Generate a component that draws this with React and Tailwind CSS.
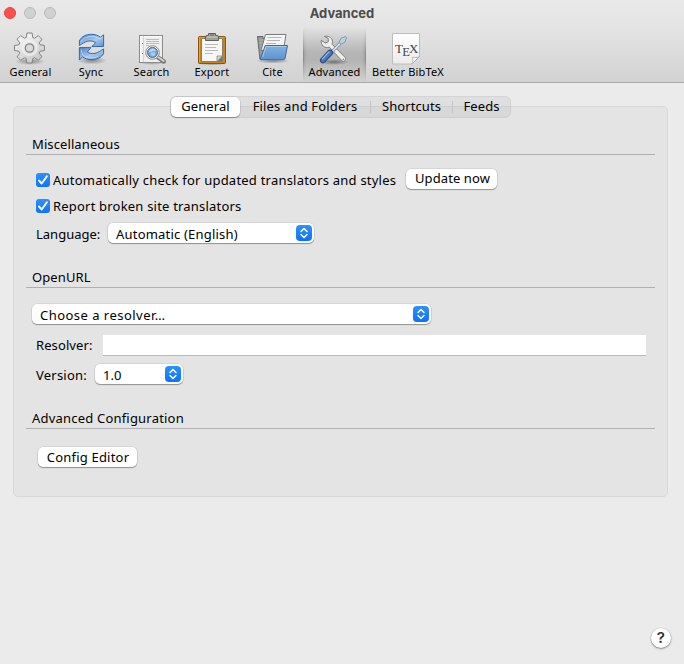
import React from "react";

const gearPath = (() => {
  const cx = 29.5, cy = 48, teeth = 8;
  const pts = [];
  for (let i = 0; i < teeth; i++) {
    const a = (i * 2 * Math.PI) / teeth - Math.PI / 2;
    [[-0.3, 11], [-0.17, 15.2], [0.17, 15.2], [0.3, 11]].forEach(([d, r]) => {
      pts.push((cx + r * Math.cos(a + d)).toFixed(2) + " " + (cy + r * Math.sin(a + d)).toFixed(2));
    });
  }
  return "M" + pts.join("L") + "Z";
})();

function GearIcon() {
  return (
    <svg className="block h-9 w-[61px]" viewBox="0 30 61 36">
      <defs>
        <linearGradient id="gear" x1="0" y1="0" x2="0.6" y2="1">
          <stop offset="0" stopColor="#fdfdfd" />
          <stop offset="1" stopColor="#c9c9c7" />
        </linearGradient>
        <radialGradient id="shade">
          <stop offset="0" stopColor="#000" stopOpacity=".38" />
          <stop offset="1" stopColor="#000" stopOpacity="0" />
        </radialGradient>
      </defs>
      <ellipse cx="30" cy="61.5" rx="15" ry="3.5" fill="url(#shade)" />
      <path d={gearPath} fill="url(#gear)" stroke="#848482" strokeWidth="1" strokeLinejoin="round" />
      <circle cx="29.5" cy="48" r="7" fill="none" stroke="#f4f4f4" strokeWidth="2" opacity=".7" />
      <circle cx="29.5" cy="48" r="4.2" fill="#dadada" stroke="#858583" strokeWidth="1.2" />
    </svg>
  );
}

function SyncIcon() {
  return (
    <svg className="block h-9 w-[60px]" viewBox="61 30 60 36">
      <defs>
        <linearGradient id="sync" x1="0" y1="0" x2="1" y2="1">
          <stop offset="0" stopColor="#4f83c3" />
          <stop offset=".55" stopColor="#a9c9ee" />
          <stop offset="1" stopColor="#5c92d2" />
        </linearGradient>
      </defs>
      <ellipse cx="92" cy="60.5" rx="15" ry="4" fill="url(#shade)" />
      <path d="M79.4 45.5V41c2-4.500 6.600-6.700 12-6.700 3.600 0 6.800 1.100 9 3l3.200-2.500v11.700H91.900l3.800-3.800c-2.200-1.700-5-2.200-8-1.500-3 .6-5 2.200-8.300 4.300Z" fill="url(#sync)" stroke="#3767ad" strokeWidth="1" strokeLinejoin="round" />
      <path d="M103.600 49v4.500c-2 4.100-6.800 6.100-12 6.100-3.800 0-6.900-1-9.100-2.800L79.400 60V47.600h11.500L87.300 52c2.200 1.400 4.800 2 7.700 1.400 3.200-.6 5.200-2.500 8.600-4.400Z" fill="url(#sync)" stroke="#3767ad" strokeWidth="1" strokeLinejoin="round" />
      <path d="M81 41.500c3-4.700 12-7.200 18.500-2.500l3-2.300M81 49.500l1.800 5.300c4 3.300 11 4.200 15.700 1" fill="none" stroke="#cfe1f6" strokeWidth=".7" />
    </svg>
  );
}

function SearchIcon() {
  return (
    <svg className="block h-9 w-[61px]" viewBox="121 30 61 36">
      <ellipse cx="152" cy="62" rx="15" ry="3" fill="url(#shade)" />
      <rect x="139.500" y="35.500" width="23" height="27" fill="#efefee" stroke="#8b8b89" />
      <path d="M140.500 62V36.500H162" fill="none" stroke="#fff" />
      <path d="M143.500 36v26" stroke="#d5d5d5" />
      <path d="M146 39.500h13M146 41.500h13M146 43.500h13M146 45.500h3" stroke="#b4b4b4" strokeWidth=".9" />
      <path d="M142 43.500h1M142 53.500h1" stroke="#888" />
      <path d="m157.500 57 6.400 4.500" stroke="#73736f" strokeWidth="4.200" strokeLinecap="round" />
      <path d="m158 57 5.700 4" stroke="#d4d4d1" strokeWidth="2" strokeLinecap="round" />
      <circle cx="152.500" cy="52.500" r="6.800" fill="#f3f3f3" stroke="#80807e" strokeWidth=".9" />
      <circle cx="152.500" cy="52.500" r="5" fill="#79a5d8" stroke="#4269a1" strokeWidth="1" />
      <path d="M148.800 52.500c0-5 6.500-5.200 7.300-1.300-2.500-.4-4.700.4-7.300 1.300Z" fill="#b8d2ef" />
      <ellipse cx="153" cy="54" rx="2.500" ry="2" fill="#a9caec" />
    </svg>
  );
}

function ExportIcon() {
  return (
    <svg className="block h-9 w-[60px]" viewBox="182 30 60 36">
      <ellipse cx="212" cy="63.500" rx="15" ry="2" fill="url(#shade)" />
      <rect x="198.500" y="36.500" width="27" height="27" rx="1" fill="#c58420" stroke="#885511" />
      <path d="M199.500 62V37.500H224" fill="none" stroke="#dfa34b" />
      <path d="M201.500 38.500h21v23h-21z" fill="#f7f7f6" stroke="#8d805f" />
      <path d="m217 61.500 5.500-5.500h-5.500z" fill="#d6d6d4" stroke="#888884" strokeWidth=".8" />
      <path d="m217 61.500 5.500-5.500v5.500z" fill="#777873" />
      <path d="M205 44.500h13M205 47.500h11M205 50.500h13M205 53.500h8" stroke="#b9b9b8" />
      <path d="M205.500 40.500v-3.700q0-1.300 1.500-1.300h1.500v-2h7v2h1.500q1.500 0 1.500 1.300v3.700z" fill="#9fa39a" stroke="#60635d" />
      <path d="M207 37h10.500" stroke="#cacdc5" />
      <path d="M210 35h4" stroke="#646660" />
    </svg>
  );
}

function CiteIcon() {
  return (
    <svg className="block h-9 w-[61px]" viewBox="242 30 61 36">
      <defs>
        <linearGradient id="folder" x1="0" y1="0" x2="0" y2="1">
          <stop offset="0" stopColor="#86b1df" />
          <stop offset="1" stopColor="#5c94d1" />
        </linearGradient>
      </defs>
      <ellipse cx="273" cy="61" rx="17" ry="2.500" fill="url(#shade)" />
      <path d="M257.500 36.500h5.500v2h9l-2 21h-10z" fill="#999b98" stroke="#646663" />
      <path d="M259 40h5M259 43h5M260 46h4M260 49h3" stroke="#bcbdba" strokeWidth=".8" />
      <path d="m265.500 34.500 20.500-.1-2.500 16H261z" fill="#f4f4f3" stroke="#777876" />
      <path d="M267.500 37.500h14M267 40.500h13M266 43.500h10" stroke="#b4b5b4" />
      <path d="M265.200 45.500h22.300l-2.500 13q-.3 1.200-1.500 1.200h-22.300q-1 0-.8-1z" fill="url(#folder)" stroke="#376aa7" strokeLinejoin="round" />
      <path d="m266 46.500-3.500 10.500M266 46.500h20.300" fill="none" stroke="#b2d0ef" strokeWidth=".8" />
    </svg>
  );
}

function ToolsIcon() {
  return (
    <svg className="block h-9 w-[63px]" viewBox="303 30 63 36">
      <ellipse cx="334" cy="62" rx="15" ry="3" fill="url(#shade)" />
      <path d="M321.200 40.300 325.300 43l3-1.200-.1-3.400-3.900-1.900c3.400-1.100 7.700.7 8.200 4.700.1 1.300-.1 2.100-.5 3l13 13.100c2 2-.9 5.300-3.100 3.400l-12.600-13.500c-4.400 1.500-8.700-1.900-8.100-6.900Z" fill="#eeeeec" stroke="#7f817d" strokeWidth="1" strokeLinejoin="round" />
      <circle cx="343.300" cy="59.200" r=".8" fill="#858585" />
      <path d="m330.500 53.500 9.500-10.100" stroke="#7889a0" strokeWidth="3.200" />
      <path d="m330.500 53.500 9.500-10.100" stroke="#dae4ef" strokeWidth="1.700" />
      <path d="m339 42.400 2-4.100 4.700-1.800 1 1-1.900 4.700-3.600 1.900z" fill="#bfcfe2" stroke="#7189a8" strokeWidth=".8" />
      <path d="m323 60.200 7.100-7.600" stroke="#204b8a" strokeWidth="6" strokeLinecap="round" />
      <path d="m323 60.200 7.100-7.600" stroke="#4779bc" strokeWidth="4" strokeLinecap="round" />
      <path d="m322.500 58.800 6.500-7" stroke="#a1c0e5" strokeWidth="1.100" strokeLinecap="round" />
    </svg>
  );
}

function TexIcon() {
  return (
    <svg className="block h-9 w-[84px]" viewBox="366 30 84 36">
      <defs>
        <linearGradient id="page" x1="0" y1="0" x2="0" y2="1">
          <stop offset="0" stopColor="#fff" />
          <stop offset="1" stopColor="#ececec" />
        </linearGradient>
      </defs>
      <path d="M392.500 33.500h27v23l-7.500 7.500h-19.500z" fill="url(#page)" stroke="#bdbdbd" />
      <path d="M412 64c1-2 1-4.200.5-6.800 2.700.6 5 .3 7-.7z" fill="#fff" stroke="#b0b0b0" strokeWidth=".9" />
      <g fill="#444" fontFamily="Liberation Serif, serif" fontSize="13">
        <text x="394.900" y="53">T</text>
        <text x="402.200" y="56" fontSize="12.500">E</text>
        <text x="409" y="53">X</text>
      </g>
    </svg>
  );
}

function Tool({ icon, label, className }) {
  return (
    <div className={"flex h-[55px] shrink-0 flex-col items-center pt-[3px] " + className}>
      {icon}
      <span className="-mt-[2px] whitespace-nowrap text-[11px] leading-4 tracking-[0.18px] text-black">{label}</span>
    </div>
  );
}

function Check() {
  return (
    <span className="flex size-[14px] shrink-0 items-center justify-center rounded-[3px] bg-linear-to-b from-[#2d90ff] to-[#0a74fb]">
      <svg viewBox="0 0 14 14" className="size-[14px]">
        <path d="m3 7.500 2.700 3 5.200-7.200" fill="none" stroke="#fff" strokeWidth="1.900" strokeLinecap="round" strokeLinejoin="round" />
      </svg>
    </span>
  );
}

const raised = "bg-white shadow-[0_0_0_0.5px_#00000020,0_1px_1px_#00000050]";

function Select({ label, className, labelClass = "" }) {
  return (
    <div className={"flex h-5 items-center justify-between rounded-[5px] pl-2 pr-[2px] " + raised + " " + className}>
      <span className={"relative top-[2px] " + labelClass}>{label}</span>
      <span className="flex size-4 items-center justify-center rounded-[4px] bg-linear-to-b from-[#2d90ff] to-[#0873fb]">
        <svg viewBox="0 0 16 16" className="size-4">
          <path d="m5 6.500 3-3 3 3M5 9.500l3 3 3-3" fill="none" stroke="#fff" strokeWidth="1.500" strokeLinecap="round" strokeLinejoin="round" />
        </svg>
      </span>
    </div>
  );
}

function Heading({ children, className }) {
  return (
    <h2 className={"ml-3 mr-3 h-5 border-b border-[#b0b0b0] pl-[6px] leading-[19px] " + className}>{children}</h2>
  );
}

export default function App() {
  return (
    <div className="flex h-[664px] w-[684px] flex-col overflow-hidden bg-[#ebebeb] font-['Noto_Sans','Open_Sans',sans-serif] text-[13px] tracking-[0.1px] text-black">
      <header className="h-[83px] shrink-0 border-b border-[#aaa] bg-[linear-gradient(#e9e9e9,#e4e4e4_27px,#d2d2d2)]">
        <div className="grid h-[27px] grid-cols-[1fr_auto_1fr] items-center pb-[2px]">
          <div className="flex gap-2 pl-1">
            <span className="size-3 rounded-full border border-[#e0443e] bg-[#ff4f4b]" />
            <span className="size-3 rounded-full border border-[#bababa] bg-[#d1d1d1]" />
            <span className="size-3 rounded-full border border-[#bababa] bg-[#d1d1d1]" />
          </div>
          <h1 className="font-[Inter,sans-serif] text-[13px] font-bold leading-4 tracking-[0px] text-[#4c4c4c]">Advanced</h1>
        </div>
        <nav className="flex">
          <Tool icon={<GearIcon />} label="General" className="w-[61px]" />
          <Tool icon={<SyncIcon />} label="Sync" className="w-[60px]" />
          <Tool icon={<SearchIcon />} label="Search" className="w-[61px]" />
          <Tool icon={<ExportIcon />} label="Export" className="w-[60px]" />
          <Tool icon={<CiteIcon />} label="Cite" className="w-[61px]" />
          <div className="relative">
            <div className="absolute inset-0 bg-[linear-gradient(90deg,#00000050,#00000018_1px,transparent_4px,transparent_59px,#00000018_62px,#00000050),linear-gradient(#0000002c,#0000002c)] mask-[linear-gradient(transparent,#000_45%,#000_60%,transparent)]" />
            <Tool icon={<ToolsIcon />} label="Advanced" className="relative w-[63px]" />
          </div>
          <Tool icon={<TexIcon />} label="Better BibTeX" className="w-[84px]" />
        </nav>
      </header>

      <div className="relative z-10 ml-[170px] mt-[13px] flex h-[22px] w-[341px] shrink-0 items-center rounded-[6px] border border-[#0000000c] bg-[#0000000d]">
        <div className={"h-5 w-[69px] rounded-[5px] text-center leading-[19px] " + raised}>General</div>
        <div className="w-[130px] text-center tracking-[0.16px]">Files and Folders</div>
        <div className="h-3 w-px bg-[#c4c4c4]" />
        <div className="w-[81px] text-center">Shortcuts</div>
        <div className="h-3 w-px bg-[#c4c4c4]" />
        <div className="flex-1 text-center">Feeds</div>
      </div>

      <main className="-mt-3 ml-[13px] h-[391px] w-[655px] shrink-0 rounded-[5px] border border-[#d8d8d8] bg-[#e4e4e4]">
        <Heading className="mt-[28px]">Miscellaneous</Heading>
        <div className="ml-[22px] mt-[15px] flex h-5 items-center">
          <Check />
          <span className="relative top-px ml-[3px] w-[353px] whitespace-nowrap tracking-[0.22px]">Automatically check for updated translators and styles</span>
          <button className={"-mt-[3px] h-5 w-[91px] rounded-[5px] pl-[2px] leading-[19px] " + raised}>Update now</button>
        </div>
        <div className="ml-[22px] mt-[6px] flex h-5 items-center">
          <Check />
          <span className="relative top-px ml-[3px] tracking-[0.2px]">Report broken site translators</span>
        </div>
        <div className="ml-[22px] mt-[7px] flex h-5 items-center">
          <span className="relative top-[2px] w-[72px] tracking-[0px]">Language:</span>
          <Select label="Automatic (English)" className="w-[206px]" labelClass="tracking-[0.2px]" />
        </div>

        <Heading className="mt-[25px]">OpenURL</Heading>
        <Select label="Choose a resolver…" className="ml-[18px] mt-[16px] w-[399px]" labelClass="tracking-[0.47px]" />
        <div className="ml-[22px] mt-[10px] flex h-[22px] items-center">
          <span className="relative top-px w-[67px]">Resolver:</span>
          <input className="h-[21px] w-[543px] border-b border-[#b9b9b9] bg-white outline-none" aria-label="Resolver" />
        </div>
        <div className="ml-[22px] mt-[8px] flex h-5 items-center">
          <span className="relative top-[2px] w-[59px] tracking-[0.22px]">Version:</span>
          <Select label="1.0" className="w-[88px]" />
        </div>

        <Heading className="mt-[25px] tracking-[0.2px]">Advanced Configuration</Heading>
        <button className={"ml-6 mt-[18px] block h-5 w-[99px] rounded-[5px] pl-px leading-[19px] tracking-[0.2px] " + raised}>Config Editor</button>
      </main>

      <button className="mb-[16px] mr-[13px] mt-auto size-5 self-end rounded-full bg-white font-[Inter,sans-serif] text-[15px] font-semibold leading-5 text-[#333] shadow-[0_0_0_0.5px_#00000020,0_1px_2px_#00000060]">?</button>
    </div>
  );
}
